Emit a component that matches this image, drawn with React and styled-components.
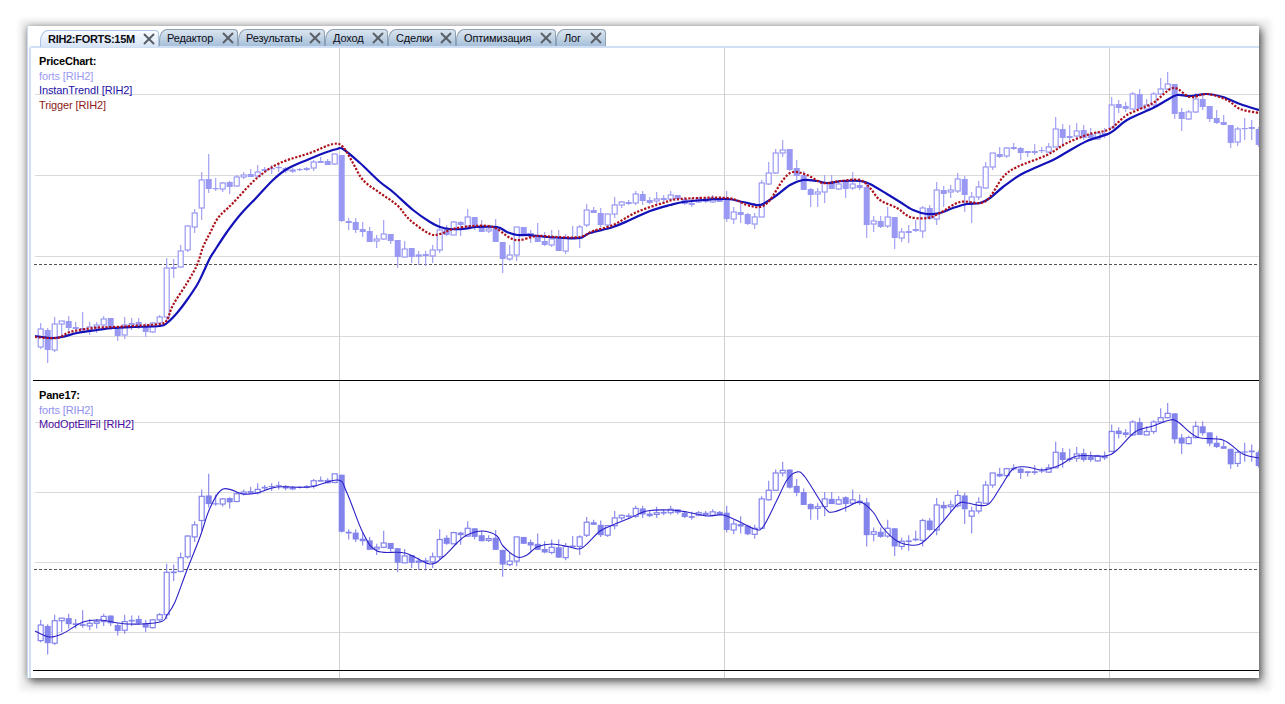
import styled, { createGlobalStyle } from "styled-components";
import { X } from "lucide-react";

const GlobalStyle = createGlobalStyle`
  html, body {
    margin: 0;
    padding: 0;
    background: #fff;
  }
`;

const TABS = [
  { label: "RIH2:FORTS:15M", width: 119, active: true },
  { label: "Редактор", width: 79 },
  { label: "Результаты", width: 87 },
  { label: "Доход", width: 63 },
  { label: "Сделки", width: 68 },
  { label: "Оптимизация", width: 100 },
  { label: "Лог", width: 50 },
];

// high, low, body top, body bottom, filled (page pixels of the upper pane)
const CANDLES = [
  [323,349,329,347,0],[328,363,330,350,1],[317,352,324,350,0],[321,337,321,324,0],[316,333,321,328,1],
  [322,333,327,329,1],[312,332,328,330,1],[322,335,327,330,0],[322,333,325,327,0],[316,330,319,325,0],
  [318,330,318,327,1],[327,341,329,336,1],[317,339,325,335,0],[318,330,323,325,1],[318,329,322,327,1],
  [323,337,327,332,1],[322,333,323,332,0],[315,325,317,323,0],[258,322,268,317,0],[259,278,267,269,1],
  [245,268,251,267,0],[225,252,226,250,0],[209,233,213,227,0],[172,220,180,208,0],[154,193,179,189,1],
  [178,191,188,189,1],[182,192,183,189,0],[181,194,182,187,1],[175,187,177,186,0],[172,179,175,177,0],
  [169,177,174,177,1],[165,178,172,176,0],[167,173,169,171,1],[165,174,168,169,1],[163,172,167,168,1],
  [167,173,168,171,1],[168,173,170,171,0],[168,171,169,170,1],[167,171,168,170,1],[160,171,162,168,0],
  [157,163,161,163,1],[159,165,161,165,1],[154,165,154,164,0],[155,222,155,221,1],[218,230,221,223,1],
  [218,233,222,230,1],[222,237,229,232,1],[227,242,231,242,1],[235,248,239,241,0],[220,240,234,239,0],
  [234,244,234,241,1],[240,268,240,257,1],[241,257,249,257,0],[248,263,248,257,1],[251,265,255,256,0],
  [251,266,254,256,1],[245,263,250,256,0],[218,253,230,250,0],[225,236,228,235,1],[221,235,222,235,0],
  [221,236,222,225,1],[209,227,217,226,0],[217,230,217,227,1],[220,232,225,232,1],[225,233,229,231,0],
  [219,242,228,242,1],[242,273,242,259,1],[245,261,255,259,0],[227,261,227,255,0],[227,235,227,235,1],
  [230,243,233,237,1],[223,242,235,242,1],[232,246,241,245,1],[230,247,239,245,0],[230,251,239,251,1],
  [234,254,238,251,0],[226,238,237,239,1],[225,248,227,238,0],[204,227,210,225,0],[207,213,210,213,1],
  [208,227,213,225,1],[214,227,214,225,0],[197,218,205,214,0],[201,208,202,205,0],[200,205,202,204,1],
  [191,205,194,203,0],[191,205,194,201,1],[197,204,200,203,1],[192,205,199,201,0],[195,202,198,200,1],
  [191,201,195,199,0],[195,201,195,199,1],[197,205,199,204,1],[198,207,203,205,1],[197,203,199,202,0],
  [197,203,199,202,1],[195,203,198,202,0],[197,202,198,202,1],[191,222,199,219,1],[207,224,212,219,0],
  [203,223,212,215,1],[213,225,214,224,1],[213,229,217,224,0],[180,217,183,217,0],[162,185,173,184,0],
  [149,174,153,173,0],[140,157,150,153,0],[149,171,149,170,1],[160,180,168,176,1],[171,190,175,190,1],
  [188,207,189,195,1],[188,207,192,194,0],[175,203,183,192,0],[175,189,183,189,1],[180,190,184,189,0],
  [180,198,181,189,1],[172,190,184,188,0],[178,190,185,188,1],[182,238,187,225,1],[216,232,221,224,0],
  [216,228,221,227,1],[207,228,217,226,0],[217,249,217,238,1],[228,242,232,238,0],[225,243,231,233,1],
  [220,232,229,231,1],[206,238,208,231,0],[205,220,208,219,1],[182,225,190,219,0],[186,207,190,194,1],
  [185,198,190,192,0],[173,193,179,191,0],[176,212,179,195,1],[192,223,197,203,0],[181,200,187,197,0],
  [162,189,167,188,0],[153,170,153,167,0],[147,158,154,157,1],[147,158,148,156,0],[143,150,147,149,1],
  [147,160,148,153,1],[151,157,151,153,1],[144,155,151,153,1],[147,153,150,151,1],[143,153,147,152,0],
  [117,147,129,147,0],[124,147,129,138,1],[125,140,136,138,1],[123,140,131,136,0],[125,140,130,138,1],
  [128,140,134,138,1],[132,140,133,139,0],[128,138,133,136,1],[97,128,105,128,0],[100,113,104,108,1],
  [102,112,106,109,1],[92,110,94,109,0],[89,109,94,109,1],[99,109,105,109,0],[92,108,94,105,0],
  [78,95,89,94,0],[72,90,84,89,0],[84,119,84,114,1],[108,131,112,119,1],[110,120,112,119,0],
  [93,113,99,112,0],[93,110,99,107,1],[106,122,106,119,1],[110,124,118,123,1],[115,125,122,125,1],
  [125,148,125,143,1],[127,146,129,142,0],[118,140,128,129,1],[120,140,127,129,1],[127,147,129,145,1],
];

const INSTANT_TREND = [
  [35,336],[50,338],[62,337],[77,333],[97,330],[113,328],[133,327],[160,326],[167,323],[177,313],[187,300],[197,285],
  [203,273],[210,258],[217,247],[227,232],[240,215],[257,197],[273,180],[287,169],[307,160],[327,152],[337,149],[343,149],
  [360,163],[380,182],[393,192],[413,210],[430,222],[440,227],[450,229],[463,229],[477,227],[497,227],[507,232],[517,235],
  [530,235],[547,237],[563,238],[580,238],[590,233],[613,227],[630,220],[650,211],[670,205],[683,202],[703,200],[727,199],
  [743,202],[757,205],[763,204],[777,195],[790,185],[803,180],[817,181],[827,183],[843,181],[860,181],[870,184],[887,194],
  [900,202],[913,210],[927,214],[940,213],[953,208],[967,204],[980,203],[990,198],[1003,187],[1020,175],[1037,167],[1053,160],
  [1067,152],[1087,141],[1110,133],[1127,120],[1153,108],[1167,100],[1177,95],[1190,96],[1207,94],[1223,97],[1240,104],[1259,110],
];

const TRIGGER = [
  [35,337],[57,338],[70,332],[93,328],[113,327],[133,326],[160,324],[167,320],[173,305],[187,283],[197,265],[203,247],
  [210,233],[218,218],[233,203],[257,178],[280,163],[310,153],[333,144],[343,147],[353,163],[363,180],[380,193],[397,205],
  [410,220],[430,234],[440,234],[453,229],[473,226],[493,227],[510,238],[520,240],[537,236],[557,237],[580,237],[593,231],
  [613,225],[637,212],[663,203],[680,199],[727,198],[747,205],[760,207],[770,200],[783,180],[793,172],[807,175],[823,183],
  [840,181],[860,180],[870,188],[880,200],[897,208],[910,217],[927,218],[940,213],[960,202],[980,203],[990,197],[1003,177],
  [1017,167],[1047,155],[1067,143],[1090,134],[1110,129],[1127,115],[1153,103],[1173,88],[1190,97],[1207,94],[1227,100],[1240,109],[1259,113],
];

const ELL_FILTER = [
  [35,631],[49,637],[62,634],[83,622],[100,620],[127,624],[160,622],[167,615],[175,602],[187,570],[200,537],[210,508],
  [223,489],[243,494],[257,493],[277,487],[310,487],[338,480],[347,493],[363,533],[377,551],[405,553],[430,564],[443,557],
  [457,543],[467,535],[483,531],[497,536],[503,546],[517,557],[527,555],[537,547],[552,544],[570,547],[582,548],[600,531],
  [613,525],[630,518],[647,511],[670,510],[687,512],[707,516],[723,515],[740,522],[755,529],[763,527],[777,500],[787,480],
  [797,472],[805,477],[825,508],[833,512],[847,507],[860,502],[873,512],[883,528],[897,541],[910,545],[922,543],[940,525],
  [958,504],[967,503],[987,505],[1000,488],[1013,469],[1027,467],[1043,470],[1060,465],[1077,456],[1105,456],[1117,450],[1135,432],
  [1153,426],[1170,420],[1178,422],[1197,437],[1223,440],[1243,454],[1259,458],
];

const VERTICALS = [339, 724, 1109];

// catmull-rom through the sampled points
function smoothPath(points) {
  let d = `M${points[0][0]} ${points[0][1]}`;
  for (let i = 0; i < points.length - 1; i++) {
    const p0 = points[i - 1] || points[i];
    const p1 = points[i];
    const p2 = points[i + 1];
    const p3 = points[i + 2] || p2;
    const c1x = p1[0] + (p2[0] - p0[0]) / 6;
    const c1y = p1[1] + (p2[1] - p0[1]) / 6;
    const c2x = p2[0] - (p3[0] - p1[0]) / 6;
    const c2y = p2[1] - (p3[1] - p1[1]) / 6;
    d += `C${c1x.toFixed(1)} ${c1y.toFixed(1)} ${c2x.toFixed(1)} ${c2y.toFixed(1)} ${p2[0]} ${p2[1]}`;
  }
  return d;
}

function Candles({ color, mapY }) {
  return CANDLES.map(([hi, lo, top, bottom, filled], i) => {
    const x = 40.7 + i * 7;
    const y1 = mapY(top);
    const y2 = mapY(bottom);
    return (
      <g key={i}>
        <line x1={x} x2={x} y1={mapY(hi)} y2={mapY(lo)} stroke={color} strokeWidth="1.1" />
        <rect
          x={filled ? x - 3 : x - 2.5}
          y={y1}
          width={filled ? 6 : 5}
          height={Math.max(y2 - y1, 1.2)}
          fill={filled ? color : "#fff"}
          stroke={filled ? "none" : color}
          strokeWidth="1.2"
        />
      </g>
    );
  });
}

function Grid({ top, bottom, rows, dashed }) {
  return (
    <>
      {rows.map((y) => (
        <line key={y} x1="35" x2="1259" y1={y + 0.5} y2={y + 0.5} stroke="#dadada" />
      ))}
      {VERTICALS.map((x) => (
        <line key={x} x1={x + 0.5} x2={x + 0.5} y1={top} y2={bottom} stroke="#d0d0d0" />
      ))}
      <line x1="34" x2="1259" y1={dashed + 0.5} y2={dashed + 0.5} stroke="#555" strokeDasharray="3 2" />
    </>
  );
}

function PriceChart() {
  return (
    <ChartSvg viewBox="33 48 1226 333" $height={333}>
      <Grid top={48} bottom={381} rows={[94, 175, 256, 336]} dashed={264} />
      <Candles color="#9999f3" mapY={(y) => y} />
      <path d={smoothPath(INSTANT_TREND)} fill="none" stroke="#1212b8" strokeWidth="2.2" />
      <path d={smoothPath(TRIGGER)} fill="none" stroke="#ad1019" strokeWidth="2.2" strokeDasharray="2.2 1.6" />
      <line x1="33" x2="1259" y1="380.5" y2="380.5" stroke="#000" />
    </ChartSvg>
  );
}

function FilterChart() {
  return (
    <ChartSvg viewBox="33 381 1226 297" $height={297}>
      <Grid top={381} bottom={678} rows={[422, 492, 562, 632]} dashed={569} />
      <Candles color="#8383ec" mapY={(y) => 422 + (y - 94) * 0.864} />
      <path d={smoothPath(ELL_FILTER)} fill="none" stroke="#2a1fc6" strokeWidth="1.1" />
      <line x1="33" x2="1259" y1="670.5" y2="670.5" stroke="#000" />
    </ChartSvg>
  );
}

export default function App() {
  return (
    <>
      <GlobalStyle />
      <Page>
        <Window>
          <TabStrip>
            {TABS.map((tab) => (
              <Tab key={tab.label} $active={tab.active} $width={tab.width}>
                <TabLabel $active={tab.active}>{tab.label}</TabLabel>
                <CloseIcon size={18} strokeWidth={2.5} />
              </Tab>
            ))}
          </TabStrip>
          <TabPanel>
            <Pane>
              <Legend>
                <LegendTitle>PriceChart:</LegendTitle>
                <LegendRow $color="#9a9af2">forts [RIH2]</LegendRow>
                <LegendRow $color="#2410a8">InstanTrendI [RIH2]</LegendRow>
                <LegendRow $color="#8c1a14">Trigger [RIH2]</LegendRow>
              </Legend>
              <PriceChart />
            </Pane>
            <Pane>
              <Legend $top={7}>
                <LegendTitle>Pane17:</LegendTitle>
                <LegendRow $color="#8f8fee">forts [RIH2]</LegendRow>
                <LegendRow $color="#4a0aa0">ModOptEllFil [RIH2]</LegendRow>
              </Legend>
              <FilterChart />
            </Pane>
          </TabPanel>
        </Window>
      </Page>
    </>
  );
}

const Page = styled.div`
  width: 1285px;
  height: 704px;
  padding: 26px 26px 26px 27px;
  box-sizing: border-box;
  overflow: hidden;
  font-family: "Liberation Sans", Arial, sans-serif;
`;

const Window = styled.div`
  display: flex;
  flex-direction: column;
  height: 652px;
  background: #fff;
  border-left: 1px solid #c9dbf2;
  box-shadow:
    3px 4px 8px rgba(0, 0, 0, 0.55),
    0 0 7px rgba(0, 0, 0, 0.3),
    2px 3px 5px 10px rgba(0, 0, 0, 0.06);
`;

const TabStrip = styled.div`
  display: flex;
  align-items: flex-end;
  height: 20px;
  padding-left: 12px;
  flex-shrink: 0;
`;

const Tab = styled.div`
  display: flex;
  align-items: center;
  justify-content: space-between;
  width: ${(p) => p.$width}px;
  height: 17px;
  box-sizing: border-box;
  padding-left: 7px;
  margin-bottom: ${(p) => (p.$active ? "-1px" : "0")};
  border: 1px solid ${(p) => (p.$active ? "#a9c4e4" : "#8ea0b4")};
  border-bottom: none;
  border-radius: 8px 4px 0 0 / 11px 4px 0 0;
  background: ${(p) =>
    p.$active
      ? "linear-gradient(#fafcfe, #d6e4f5)"
      : "linear-gradient(#dbe5ef, #a6c0da)"};
  position: relative;
  z-index: ${(p) => (p.$active ? 1 : 0)};
`;

const TabLabel = styled.span`
  font-size: 11px;
  font-weight: ${(p) => (p.$active ? 700 : 400)};
  letter-spacing: ${(p) => (p.$active ? "-0.3px" : "-0.15px")};
  color: #0c0c14;
  white-space: nowrap;
`;

const CloseIcon = styled(X)`
  color: #5a5f66;
  flex-shrink: 0;
  margin: -2px 0;
`;

const TabPanel = styled.div`
  flex: 1;
  min-height: 0;
  margin-left: 1px;
  padding-left: 2px;
  border-left: 2px solid #d0e0f3;
  border-top: 2px solid #d0dff3;
  border-top-left-radius: 3px;
  overflow: hidden;
`;

const Pane = styled.div`
  position: relative;
`;

const ChartSvg = styled.svg`
  display: block;
  width: 1226px;
  height: ${(p) => p.$height}px;
`;

const Legend = styled.div`
  position: absolute;
  left: 6px;
  top: ${(p) => p.$top ?? 6}px;
  display: flex;
  flex-direction: column;
  font-size: 11px;
  line-height: 14.7px;
  letter-spacing: -0.12px;
`;

const LegendTitle = styled.span`
  font-weight: 700;
  letter-spacing: -0.2px;
  color: #000;
`;

const LegendRow = styled.span`
  color: ${(p) => p.$color};
`;
